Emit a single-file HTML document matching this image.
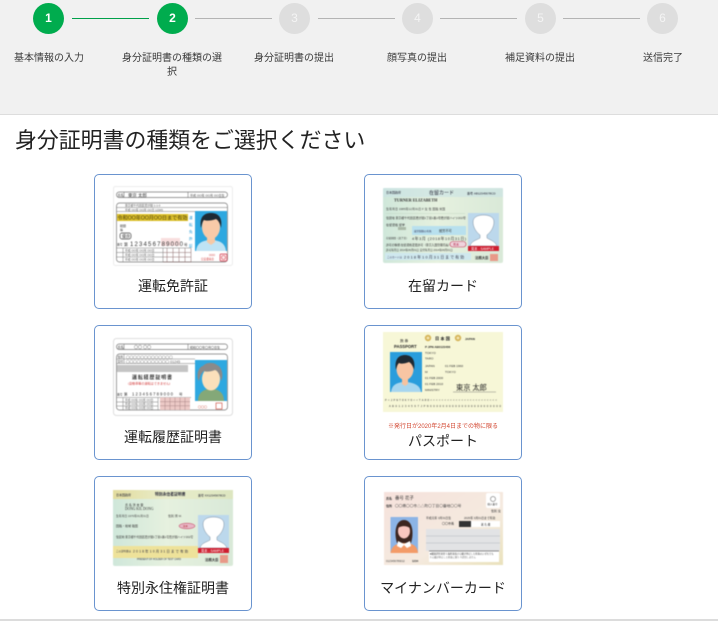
<!DOCTYPE html>
<html lang="ja">
<head>
<meta charset="utf-8">
<title>身分証明書の種類</title>
<style>
html,body{margin:0;padding:0;background:#fff}
body{width:718px;height:621px;position:relative;overflow:hidden;font-family:"Liberation Sans","Noto Sans CJK JP",sans-serif;color:#333}
.hd{position:absolute;left:0;top:0;width:718px;height:114px;background:#f1f1f1;border-bottom:1px solid #ddd}
.c{position:absolute;top:3px;width:31px;height:31px;border-radius:50%;background:#dedede;color:#f4f4f4;font-size:12px;line-height:31px;text-align:center}
.c.on{background:#00ac4e;color:#fff;font-weight:bold}
.l{position:absolute;top:18px;height:1px;background:#b4b4b4}
.l.on{background:#00a04a}
.t{position:absolute;top:52px;width:120px;text-align:center;font-size:10px;line-height:14px;color:#3a3a3a}
h1{position:absolute;left:15px;top:126px;margin:0;font-weight:400;font-size:21.9px;line-height:30px;color:#222;white-space:nowrap}
.card{position:absolute;width:156px;height:133px;border:1px solid #6a94cf;border-radius:5px;background:#fff}
.card svg{position:absolute;display:block;filter:blur(.4px)}
.card b{position:absolute;left:0;width:156px;text-align:center;font-weight:400;font-size:14px;line-height:20px;color:#222;white-space:nowrap}
.note{position:absolute;left:0;width:156px;text-align:center;font-size:6px;line-height:8px;color:#d2452f;white-space:nowrap}
.foot{position:absolute;left:0;top:619px;width:718px;height:2px;background:#dcdcdc}
svg text{font-family:"Liberation Sans","Noto Sans CJK JP",sans-serif}
</style>
</head>
<body>
<div class="hd">
  <div class="c on" style="left:33px">1</div>
  <div class="c on" style="left:157px">2</div>
  <div class="c" style="left:279px">3</div>
  <div class="c" style="left:402px">4</div>
  <div class="c" style="left:525px">5</div>
  <div class="c" style="left:647px">6</div>
  <div class="l on" style="left:72px;width:77px"></div>
  <div class="l" style="left:195px;width:77px"></div>
  <div class="l" style="left:318px;width:77px"></div>
  <div class="l" style="left:440px;width:77px"></div>
  <div class="l" style="left:563px;width:77px"></div>
  <div class="t" style="left:-11px">基本情報の入力</div>
  <div class="t" style="left:112px">身分証明書の種類の選<br>択</div>
  <div class="t" style="left:234px">身分証明書の提出</div>
  <div class="t" style="left:357px">顔写真の提出</div>
  <div class="t" style="left:480px">補足資料の提出</div>
  <div class="t" style="left:603px">送信完了</div>
</div>

<h1>身分証明書の種類をご選択ください</h1>

<!-- 運転免許証 -->
<div class="card" style="left:94px;top:174px">
<svg style="left:18px;top:11px" width="120" height="80" viewBox="0 0 120 80">
  <rect x=".5" y=".5" width="119" height="79" rx="2" fill="#fff" stroke="#ececec"/>
  <rect x="3.500" y="6" width="111" height="5.500" rx="2.700" fill="#fff" stroke="#777" stroke-width=".7"/>
  <path d="M11 6v5.500M75 6v5.500" stroke="#777" stroke-width=".6"/>
  <text x="4.500" y="10.400" font-size="3.200" fill="#333">氏名</text>
  <text x="15" y="10.800" font-size="4.400" fill="#333">東京 太郎</text>
  <text x="77" y="10.300" font-size="3" fill="#444">平成 OO年 OO月 OO日生</text>
  <rect x="3.500" y="17" width="111" height="59" rx="3" fill="#fff" stroke="#777" stroke-width=".7"/>
  <path d="M3.500 21.500H114.500M3.500 25.500H82" stroke="#777" stroke-width=".5"/>
  <text x="12" y="20.600" font-size="2.800" fill="#555">東京都千代田区霞が関 1-1-0</text>
  <text x="12" y="24.800" font-size="2.800" fill="#555">平成 OO年 OO月 OO日  12345</text>
  <rect x="4" y="28" width="71" height="7" fill="#dcc02a"/>
  <text x="4.500" y="33.400" font-size="5" fill="#4a3d10" textLength="70" lengthAdjust="spacingAndGlyphs">令和OO年OO月OO日まで有効</text>
  <text x="7" y="41" font-size="3" fill="#444">眼鏡</text>
  <text x="7" y="45" font-size="3" fill="#444">等</text>
  <rect x="7" y="47" width="11" height="6" rx="2" fill="#fff" stroke="#444" stroke-width=".7"/>
  <text x="9" y="51.700" font-size="4" fill="#333">優良</text>
  <rect x="48" y="52" width="19" height="8" fill="#f8dede"/>
  <text x="4" y="59.500" font-size="2.800" fill="#333">番号</text>
  <text x="11" y="60" font-size="4" fill="#333">第</text>
  <text x="17" y="60" font-size="6" fill="#333" textLength="53">123456789000</text>
  <text x="71" y="60" font-size="3.500" fill="#333">号</text>
  <path d="M3.500 62H78M3.500 66.500H50M3.500 71H50M10 62V76M50 62V76" stroke="#777" stroke-width=".5"/>
  <text x="12" y="65.500" font-size="2.800" fill="#555">平成 OO年 OO月 OO日</text>
  <text x="12" y="70" font-size="2.800" fill="#555">平成 OO年 OO月 OO日</text>
  <text x="12" y="74.500" font-size="2.800" fill="#555">平成 OO年 OO月 OO日</text>
  <path d="M54 62V76M60 62V76M66 62V76M72 62V76M78 62V76M50 66.500H78M50 71H78M50 76H78" stroke="#8a6a6a" stroke-width=".5" fill="none"/>
  <text x="76" y="33" font-size="3.600" fill="#2d9fd8">運</text>
  <text x="76" y="40" font-size="3.600" fill="#2d9fd8">転</text>
  <text x="76" y="47" font-size="3.600" fill="#2d9fd8">免</text>
  <text x="76" y="54" font-size="3.600" fill="#2d9fd8">許</text>
  <text x="76" y="61" font-size="3.600" fill="#2d9fd8">証</text>
  <rect x="82" y="25" width="32" height="40" fill="#2ea8e0"/>
  <path d="M83 65c1-8 6-10 13-11h4c7 1 12 3 13 11z" fill="#bfe3f4"/>
  <path d="M94 50h8v6l-4 3-4-3z" fill="#f6c9a6"/>
  <ellipse cx="98" cy="41" rx="9" ry="12" fill="#f8caa8"/>
  <path d="M88 42c-2-12 4-15 10-15s12 3 10 15c-1-5-3-8-5-9-5 2-10 2-12 1-2 2-2 5-3 8z" fill="#1e2a33"/>
  <text x="96" y="70" font-size="2.600" fill="#c33">OOO</text>
  <text x="88" y="74" font-size="2.600" fill="#c33">公安委員会</text>
  <rect x="107" y="68" width="7" height="7" rx="1" fill="#fbe9e9" stroke="#d4394c" stroke-width=".7"/>
  <circle cx="110.500" cy="71.500" r="2" fill="none" stroke="#d4394c" stroke-width=".6"/>
</svg>
<b style="top:101px">運転免許証</b>
</div>

<!-- 在留カード -->
<div class="card" style="left:364px;top:174px">
<svg style="left:18px;top:13px" width="120" height="75" viewBox="0 0 120 75">
  <defs>
    <linearGradient id="g1" x1="0" x2="1" y1="0" y2="0"><stop offset="0" stop-color="#cfe7da"/><stop offset=".45" stop-color="#e6f1df"/><stop offset="1" stop-color="#d9e9d8"/></linearGradient>
    <linearGradient id="g2" x1="0" x2="1" y1="0" y2="0"><stop offset="0" stop-color="#e3dc9e"/><stop offset=".45" stop-color="#e9edcb"/><stop offset="1" stop-color="#dde6c0"/></linearGradient>
    <linearGradient id="g3" x1="0" x2="1" y1="0" y2="1"><stop offset="0" stop-color="#f6e2dc"/><stop offset=".6" stop-color="#f5eadf"/><stop offset="1" stop-color="#eae2bc"/></linearGradient>
  </defs>
  <rect width="120" height="75" rx="2" fill="url(#g1)"/>
  <rect width="120" height="9" fill="#c9e2e6" opacity=".6"/>
  <text x="3" y="5.500" font-size="3" fill="#223">日本国政府</text>
  <text x="46" y="6.500" font-size="5" fill="#223">在留カード</text>
  <text x="84" y="6.500" font-size="3" fill="#223">番号 AB12345678CD</text>
  <text x="11" y="13.500" font-size="4.200" fill="#333" style="font-family:'Liberation Serif',serif" font-weight="bold">TURNER ELIZABETH</text>
  <text x="3" y="22" font-size="3" fill="#444">生年月日  1985年12月31日  F 女 性  国籍 米国</text>
  <path d="M3 25.500H82" stroke="#bcd0bc" stroke-width=".4"/>
  <text x="3" y="31" font-size="2.900" fill="#333">住居地 東京都千代田区霞が関1丁目1番1号霞が関ハイツ202号</text>
  <text x="3" y="38" font-size="3" fill="#333">在留資格 留学</text>
  <rect x="15" y="39" width="8" height="3" fill="#aab9a8"/>
  <rect x="29" y="38" width="54" height="9" fill="#b8e0ee"/>
  <text x="31" y="43.800" font-size="2.500" fill="#335">就労制限の有無</text>
  <text x="56" y="44" font-size="3.200" fill="#333">就労不可</text>
  <text x="3" y="51" font-size="2.500" fill="#444">在留期間（満了日）</text>
  <text x="29" y="52" font-size="3.800" fill="#333" textLength="54">4年3月 (2018年10月31日)</text>
  <text x="3" y="58" font-size="2.800" fill="#333">許可の種類 在留資格変更許可（東京入国管理局長）</text>
  <rect x="67" y="53.500" width="16" height="5.500" rx="2.700" fill="#efd3dd" stroke="#c23c5a" stroke-width=".6"/>
  <text x="70" y="57.500" font-size="3" fill="#b42a4a">見本</text>
  <text x="3" y="63" font-size="2.600" fill="#333">許可年月日 2014年06月01日 交付年月日 2014年06月01日</text>
  <rect x="2" y="65" width="86" height="7" fill="#cfe8ee"/>
  <text x="4" y="70" font-size="2.500" fill="#446">このカードは</text>
  <text x="21" y="70.500" font-size="3.800" fill="#334" textLength="60">2018年10月31日まで有効</text>
  <rect x="85" y="25" width="31" height="33" fill="#bcd8ec"/>
  <path d="M87 58c1-5 7-6 10-8v-3c-4-3-7-8-7-13 0-5 5-7 10.500-7s10.500 2 10.500 7c0 5-3 10-7 13v3c3 2 8 3 10 8z" fill="#fff" stroke="#7c8ea0" stroke-width=".5"/>
  <rect x="85" y="58" width="31" height="5" fill="#cf1d2f"/>
  <text x="88" y="62" font-size="3.300" fill="#fff">見本 - SAMPLE</text>
  <text x="92" y="71" font-size="3.400" fill="#333" font-weight="bold">法務大臣</text>
  <rect x="107" y="66" width="8" height="7" fill="#e89988"/>
</svg>
<b style="top:101px">在留カード</b>
</div>

<!-- 運転履歴証明書 -->
<div class="card" style="left:94px;top:325px">
<svg style="left:18px;top:12px" width="120" height="78" viewBox="0 0 120 78">
  <rect x=".5" y=".5" width="119" height="77" rx="3" fill="#fff" stroke="#dedede"/>
  <rect x="3.500" y="6" width="111" height="5.500" rx="2.700" fill="#fff" stroke="#777" stroke-width=".7"/>
  <path d="M11 6v5.500M75 6v5.500" stroke="#777" stroke-width=".6"/>
  <text x="4.500" y="10.400" font-size="3.200" fill="#333">氏名</text>
  <text x="21" y="10.500" font-size="4" fill="#555">〇〇  〇〇</text>
  <text x="77" y="10.400" font-size="3" fill="#444">昭和〇〇年〇月〇日生</text>
  <rect x="3.500" y="16" width="111" height="56" rx="3" fill="#fff" stroke="#777" stroke-width=".7"/>
  <path d="M3.500 21H82M3.500 25.500H82M11 16V25.500" stroke="#777" stroke-width=".5"/>
  <text x="4.500" y="20" font-size="2.800" fill="#333">住所</text>
  <text x="4.500" y="24.500" font-size="2.800" fill="#333">交付</text>
  <text x="13" y="20.300" font-size="3.600" fill="#666">〇〇〇〇〇〇〇〇〇〇〇〇〇</text>
  <text x="13" y="24.800" font-size="3.600" fill="#666">〇〇〇〇〇〇〇〇〇〇〇〇  01245</text>
  <rect x="4" y="27" width="71" height="7" fill="#c4c4c4"/>
  <text x="19" y="41" font-size="5" fill="#333" font-weight="bold" textLength="40">運転経歴証明書</text>
  <text x="15" y="46.500" font-size="3.100" fill="#d23a3a">(自動車等の運転はできません)</text>
  <text x="4" y="57.500" font-size="2.800" fill="#333">番号</text>
  <text x="11" y="57.500" font-size="3.500" fill="#333">第</text>
  <text x="19" y="57.500" font-size="4.200" fill="#333" textLength="41">123456789000</text>
  <text x="66" y="57.500" font-size="3.500" fill="#333">号</text>
  <path d="M3.500 59.500H78M3.500 64H45M3.500 68H45M10 59.500V72M45 59.500V72" stroke="#777" stroke-width=".5"/>
  <text x="12" y="63" font-size="2.700" fill="#555">平成 OO年 OO月 OO日</text>
  <text x="12" y="67" font-size="2.700" fill="#555">平成 OO年 OO月 OO日</text>
  <text x="12" y="71" font-size="2.700" fill="#555">平成 OO年 OO月 OO日</text>
  <rect x="47" y="59.500" width="30" height="12.500" fill="#ecc9c6"/>
  <path d="M52 59.500V72M57 59.500V72M62 59.500V72M67 59.500V72M72 59.500V72M47 63.700H77M47 67.800H77" stroke="#9d7a78" stroke-width=".4"/>
  <rect x="82" y="22" width="32" height="41" fill="#2ea8e0"/>
  <path d="M85 63c0-8 5-11 10-12h6c5 1 10 4 10 12z" fill="#84a878"/>
  <ellipse cx="98" cy="41" rx="9" ry="11.500" fill="#fbe0bb"/>
  <path d="M86 43c-3-5-1-14 4-15 3-4 11-4 14-1 5 2 7 11 4 16-1-6-3-10-6-11-5 2-9 2-11 1-3 2-4 5-5 10z" fill="#8a8a8a"/>
  <text x="85" y="70" font-size="3" fill="#d25a4a">〇〇〇</text>
  <rect x="103" y="65" width="6" height="6" fill="none" stroke="#d25a4a" stroke-width=".7"/>
</svg>
<b style="top:101px">運転履歴証明書</b>
</div>

<!-- パスポート -->
<div class="card" style="left:364px;top:325px">
<svg style="left:18px;top:6px" width="120" height="80" viewBox="0 0 120 80">
  <rect width="120" height="80" fill="#f7f7d7"/>
  <text x="17" y="10" font-size="3.600" fill="#222">旅 券</text>
  <text x="11" y="16" font-size="4.200" fill="#222" font-weight="bold">PASSPORT</text>
  <g fill="#d6b45a"><circle cx="45" cy="6" r="3.200"/><circle cx="75" cy="6" r="3.200"/></g>
  <g fill="#f3e6b4"><circle cx="45" cy="6" r="1.400"/><circle cx="75" cy="6" r="1.400"/></g>
  <text x="52" y="8" font-size="4.200" fill="#222" font-weight="bold">日 本 国</text>
  <text x="82" y="8" font-size="3" fill="#222" font-weight="bold">JAPAN</text>
  <text x="42" y="16" font-size="3" fill="#222" font-weight="bold">P    JPN          AB0123456</text>
  <rect x="7" y="20" width="32" height="40" fill="#2a9ddc"/>
  <path d="M8 60c1-7 5-9 12-10h4c7 1 13 3 14 10z" fill="#a7d6ef"/>
  <path d="M19 46h6v6l-3 2-3-2z" fill="#f5c3a0"/>
  <ellipse cx="22" cy="37" rx="8.500" ry="11" fill="#f7c5a3"/>
  <path d="M13 38c-2-11 3-15 9-15s11 4 9 15c-1-4-3-7-5-8-5 2-8 2-10 1-2 2-2 4-3 7z" fill="#1f2a33"/>
  <g font-size="3.100" fill="#333">
    <text x="42" y="22">TOKYO</text>
    <text x="42" y="27.500">TARO</text>
    <text x="42" y="35">JAPAN</text>
    <text x="42" y="41">M</text>
    <text x="42" y="47">01 FEB 2000</text>
    <text x="42" y="53">01 FEB 2010</text>
    <text x="42" y="59">MINISTRY</text>
    <text x="62" y="35">01 FEB 1960</text>
    <text x="62" y="41">TOKYO</text>
  </g>
  <text x="73" y="58" font-size="7.200" fill="#222">東京 太郎</text>
  <path d="M70 60H113" stroke="#666" stroke-width=".4"/>
  <text x="2" y="69" font-size="2.900" fill="#444" textLength="112" style="font-family:'Liberation Mono',monospace">P&lt;JPNTOKYO&lt;&lt;TARO&lt;&lt;&lt;&lt;&lt;&lt;&lt;&lt;&lt;&lt;&lt;&lt;&lt;&lt;&lt;&lt;&lt;&lt;&lt;&lt;&lt;&lt;&lt;&lt;</text>
  <text x="6" y="75" font-size="2.900" fill="#444" textLength="112" style="font-family:'Liberation Mono',monospace">AB01234567JPN60000000000000000000000</text>
</svg>
<div class="note" style="top:97px">※発行日が2020年2月4日までの物に限る</div>
<b style="top:105px">パスポート</b>
</div>

<!-- 特別永住権証明書 -->
<div class="card" style="left:94px;top:476px">
<svg style="left:18px;top:13px" width="120" height="76" viewBox="0 0 120 76">
  <rect width="120" height="76" rx="2" fill="url(#g1)"/>
  <rect width="120" height="9" fill="url(#g2)"/>
  <rect y="56" width="85" height="12" fill="#eee29a"/>
  <text x="3" y="6" font-size="3" fill="#223">日本国政府</text>
  <text x="42" y="5.500" font-size="3.800" fill="#223" font-weight="bold">特別永住者証明書</text>
  <text x="85" y="6.500" font-size="2.900" fill="#223">番号 XX12345678CD</text>
  <text x="12" y="16" font-size="3" fill="#333">氏 名 洪 吉 童</text>
  <text x="12" y="20" font-size="3.600" fill="#333" style="font-family:'Liberation Serif',serif">DONG KIL DONG</text>
  <text x="3" y="27" font-size="2.800" fill="#444">生年月日 1970年01月31日</text>
  <text x="55" y="27" font-size="3" fill="#444">性別 男 M.</text>
  <text x="3" y="37" font-size="3" fill="#333">国籍・地域 韓国</text>
  <text x="3" y="48" font-size="2.800" fill="#333">住居地 東京都千代田区霞が関1丁目1番1号霞が関ハイツ202号</text>
  <ellipse cx="74" cy="36" rx="8" ry="2.800" fill="#e8b6c6" stroke="#c23c5a" stroke-width=".5"/>
  <text x="70" y="37" font-size="2.400" fill="#a22">見本</text>
  <text x="3" y="62" font-size="2.500" fill="#334">この証明書は</text>
  <text x="20" y="62.500" font-size="3.400" fill="#334" textLength="55">2018年10月31日まで有効</text>
  <text x="24" y="70" font-size="2.400" fill="#333">PRESENT OF HOLDER OF TEST CARD</text>
  <rect x="85" y="25" width="31" height="33" fill="#bcd8ec"/>
  <path d="M87 58c1-5 7-6 10-8v-3c-4-3-7-8-7-13 0-5 5-7 10.500-7s10.500 2 10.500 7c0 5-3 10-7 13v3c3 2 8 3 10 8z" fill="#fff" stroke="#7c8ea0" stroke-width=".5"/>
  <rect x="85" y="58" width="31" height="5" fill="#cf1d2f"/>
  <text x="88" y="62" font-size="3.300" fill="#fff">見本 - SAMPLE</text>
  <text x="92" y="71" font-size="3.400" fill="#333" font-weight="bold">法務大臣</text>
  <rect x="107" y="65" width="8" height="8" fill="#e89988"/>
</svg>
<b style="top:101px">特別永住権証明書</b>
</div>

<!-- マイナンバーカード -->
<div class="card" style="left:364px;top:476px">
<svg style="left:19px;top:15px" width="119" height="73" viewBox="0 0 119 73">
  <rect width="119" height="73" fill="url(#g3)"/>
  <text x="2" y="7.500" font-size="3" fill="#333" font-weight="bold">氏名</text>
  <text x="11" y="7.500" font-size="4.400" fill="#333">番号  花子</text>
  <text x="2" y="15" font-size="3" fill="#333" font-weight="bold">住所</text>
  <text x="11" y="15" font-size="3.700" fill="#444">〇〇県〇〇市△△町〇丁目〇番地〇〇号</text>
  <rect x="102" y="1" width="14" height="15" rx="2" fill="#fff"/>
  <circle cx="109" cy="7" r="2.500" fill="none" stroke="#888" stroke-width=".7"/>
  <text x="103.500" y="13" font-size="2.500" fill="#333">個人番号</text>
  <text x="107" y="20" font-size="3" fill="#333">性別 女</text>
  <text x="42" y="27" font-size="2.800" fill="#333">平成元年 3月31日生</text>
  <text x="80" y="27" font-size="2.800" fill="#333">2025年 3月31日まで有効</text>
  <text x="58" y="32.500" font-size="3" fill="#333">〇〇市長</text>
  <rect x="75" y="29" width="12" height="6" fill="#333"/>
  <rect x="87" y="29" width="29" height="6" fill="#fff"/>
  <text x="97" y="33.500" font-size="2.600" fill="#333">署 名 欄</text>
  <rect x="6.500" y="25" width="27.500" height="36" fill="#8cb4e6"/>
  <path d="M6.500 61c1-7 6-9 10-10h8c4 1 9 3 9.500 10z" fill="#f39b68"/>
  <path d="M13 51c-3-9-2-23 7-23s10 14 7 23z" fill="#3d2620"/>
  <ellipse cx="20" cy="39" rx="6" ry="7.500" fill="#f9c7c0"/>
  <path d="M14 36c0-7 11-8 12 0-3-2-8-3-12 0z" fill="#3d2620"/>
  <path d="M14 49l6 3 6-3 1 5-4 2-3-3-3 3-4-2z" fill="#fff"/>
  <rect x="42" y="37" width="74" height="22" fill="#e2e3e5"/>
  <path d="M42 44H116M42 51H116" stroke="#b2b8bc" stroke-width=".5"/>
  <rect x="45" y="59" width="70" height="11" fill="#fff"/>
  <path d="M45 59H115" stroke="#222" stroke-width=".6"/>
  <text x="46" y="62.500" font-size="2.300" fill="#444">■臓器提供意思 1.脳死後及び心臓が停止した死後のいずれでも</text>
  <text x="46" y="66" font-size="2.300" fill="#666">2.心臓が停止した死後に限り 3.提供しません</text>
  <text x="2" y="70" font-size="2.600" fill="#444">0123456789012</text>
  <text x="28" y="70" font-size="2.800" fill="#333" font-weight="bold">1234</text>
</svg>
<b style="top:101px">マイナンバーカード</b>
</div>

<div class="foot"></div>
</body>
</html>
